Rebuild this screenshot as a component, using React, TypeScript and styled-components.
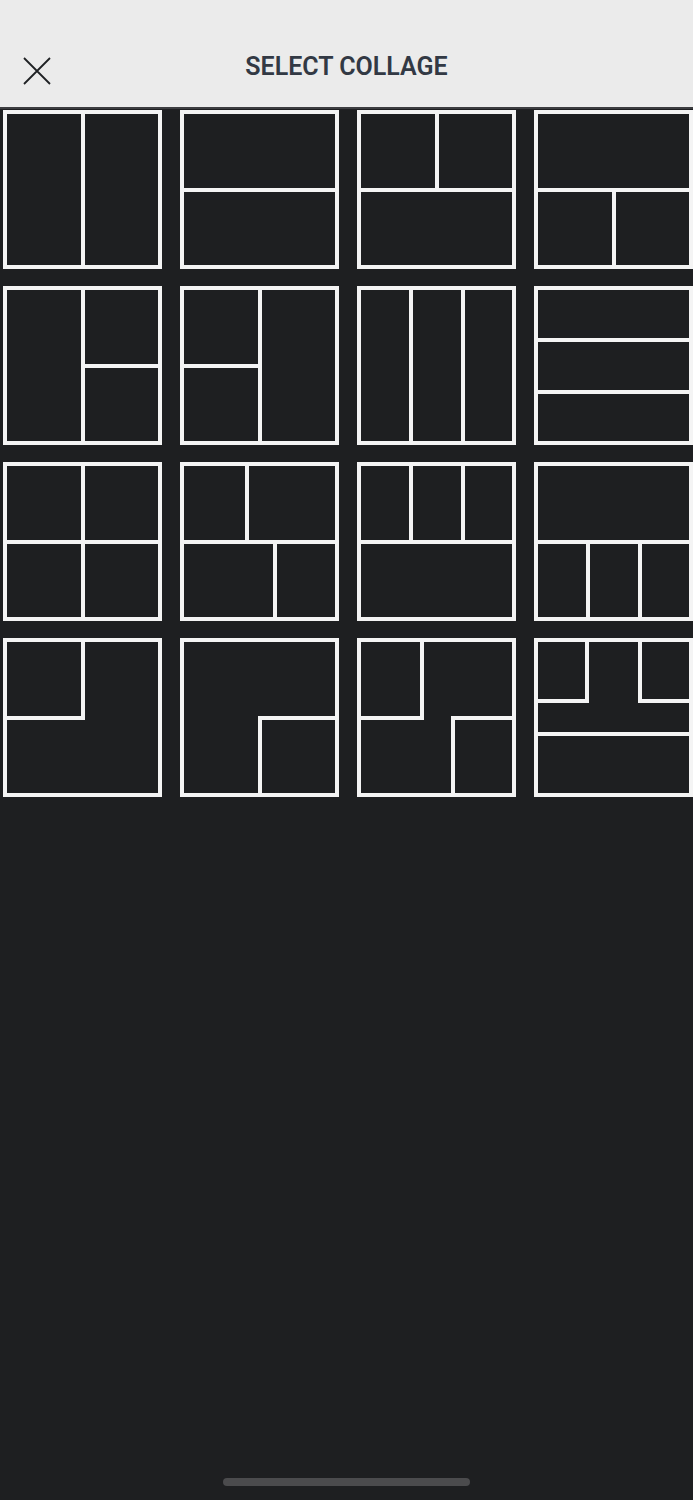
import React from 'react'
import styled, { createGlobalStyle } from 'styled-components'

type Seg = [number, number, number, number]

// each layout is a list of divider segments inside a 159px tile (x1, y1, x2, y2)
const LAYOUTS: Seg[][] = [
  [[80, 0, 80, 159]],
  [[0, 80, 159, 80]],
  [[0, 80, 159, 80], [80, 0, 80, 80]],
  [[0, 80, 159, 80], [80, 80, 80, 159]],
  [[80, 0, 80, 159], [80, 80, 159, 80]],
  [[80, 0, 80, 159], [0, 80, 80, 80]],
  [[54, 0, 54, 159], [106, 0, 106, 159]],
  [[0, 54, 159, 54], [0, 106, 159, 106]],
  [[80, 0, 80, 159], [0, 80, 159, 80]],
  [[0, 80, 159, 80], [67, 0, 67, 80], [95, 80, 95, 159]],
  [[0, 80, 159, 80], [54, 0, 54, 80], [106, 0, 106, 80]],
  [[0, 80, 159, 80], [54, 80, 54, 159], [106, 80, 106, 159]],
  [[80, 0, 80, 80], [0, 80, 80, 80]],
  [[80, 80, 80, 159], [80, 80, 159, 80]],
  [[65, 0, 65, 80], [0, 80, 65, 80], [96, 80, 96, 159], [96, 80, 159, 80]],
  [[53, 0, 53, 63], [0, 63, 53, 63], [106, 0, 106, 63], [106, 63, 159, 63], [0, 96, 159, 96]],
]

const GlobalStyle = createGlobalStyle`
  html, body {
    margin: 0;
    padding: 0;
    background: #1e1f21;
    overflow-x: hidden;
  }
`

const Screen = styled.div`
  width: 693px;
  min-height: 100vh;
  display: flex;
  flex-direction: column;
  background: #1e1f21;
  overflow: hidden;
`

const Header = styled.header`
  height: 109px;
  box-sizing: border-box;
  padding-top: 44px;
  background: #ebebeb;
  border-bottom: 2px solid #3c3d40;
  display: grid;
  grid-template-columns: 1fr auto 1fr;
  align-items: start;
`

const CloseButton = styled.button`
  justify-self: start;
  margin: 13px 0 0 23px;
  padding: 0;
  border: none;
  background: none;
  width: 28px;
  height: 28px;
  display: flex;
  cursor: pointer;
`

const Title = styled.h1`
  margin: 0;
  height: 46px;
  line-height: 46px;
  font-family: Roboto, 'Liberation Sans', sans-serif;
  font-weight: 600;
  font-size: 25px;
  color: #323944;
  letter-spacing: 0;
`

const Grid = styled.div`
  display: grid;
  grid-template-columns: repeat(4, 159px);
  column-gap: 18px;
  row-gap: 17px;
  padding: 1px 0 0 3px;
`

const Tile = styled.button`
  width: 159px;
  height: 159px;
  padding: 0;
  border: none;
  background: #1e1f21;
  display: block;
  cursor: pointer;
`

const HomeBar = styled.div`
  margin: auto auto 14px;
  width: 247px;
  height: 8px;
  border-radius: 4px;
  background: #4b4b4d;
`

const CollageIcon: React.FC<{ segs: Seg[] }> = ({ segs }) => (
  <svg width="159" height="159" viewBox="0 0 159 159">
    <rect x="2" y="2" width="155" height="155" fill="#1e1f21" stroke="#f4f4f4" strokeWidth="4" />
    {segs.map(([x1, y1, x2, y2], i) => (
      <line
        key={i}
        x1={x1}
        y1={y1}
        x2={x2}
        y2={y2}
        stroke="#f4f4f4"
        strokeWidth="4"
        strokeLinecap="square"
      />
    ))}
  </svg>
)

const App: React.FC = () => {
  return (
    <Screen>
      <GlobalStyle />
      <Header>
        <CloseButton aria-label="close">
          <svg width="28" height="28" viewBox="0 0 28 28">
            <path d="M1 1 L27 27 M27 1 L1 27" stroke="#1f2124" strokeWidth="1.8" fill="none" />
          </svg>
        </CloseButton>
        <Title>SELECT COLLAGE</Title>
        <span />
      </Header>
      <Grid>
        {LAYOUTS.map((segs, i) => (
          <Tile key={i}>
            <CollageIcon segs={segs} />
          </Tile>
        ))}
      </Grid>
      <HomeBar />
    </Screen>
  )
}

export default App
